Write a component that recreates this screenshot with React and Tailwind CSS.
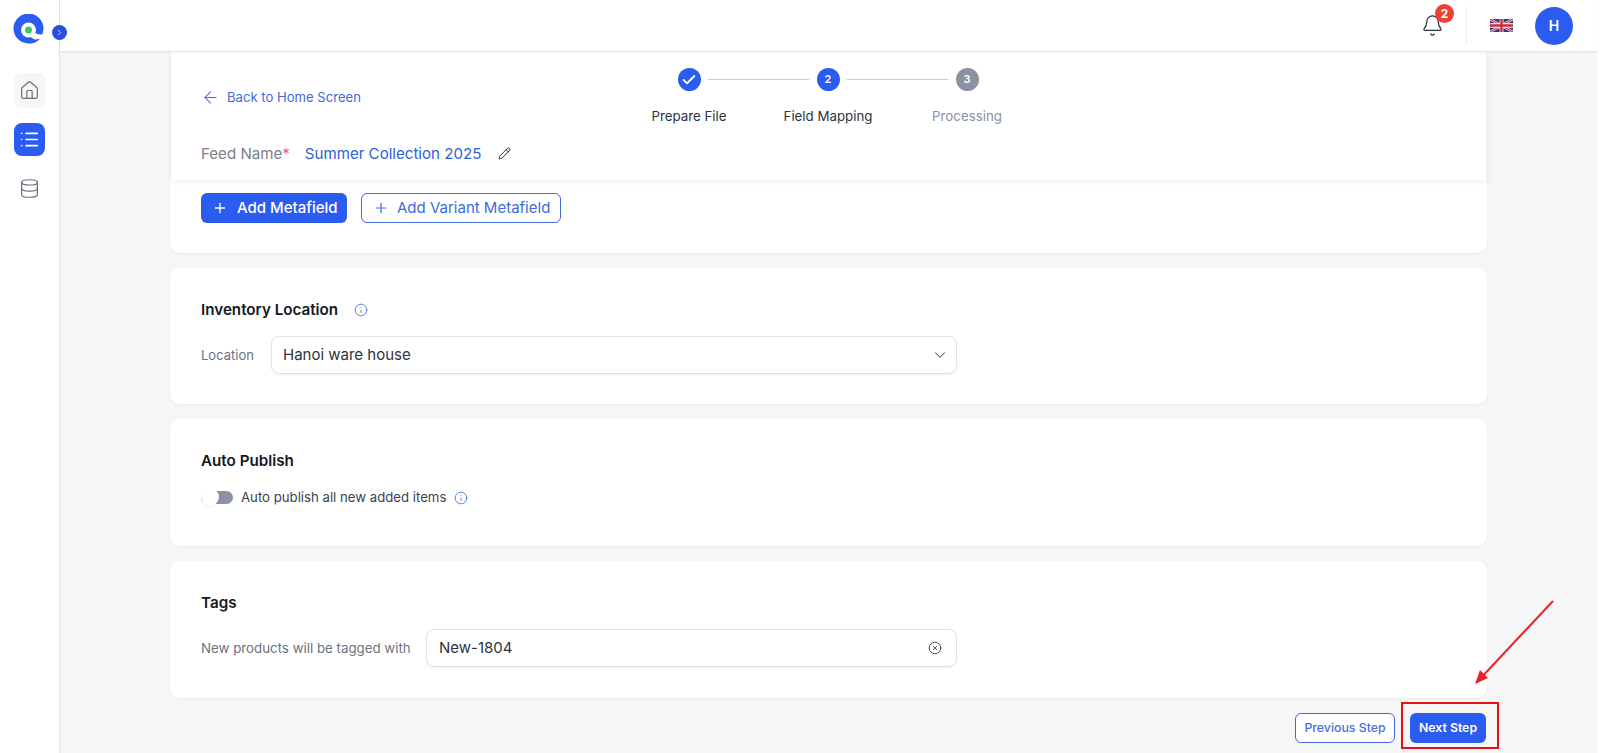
import { ArrowLeft, Bell, Check, ChevronDown, ChevronRight, CircleX, Database, Home, Info, List, Pencil, Plus } from "lucide-react";

const Logo = () => (
    <svg width="32" height="30" viewBox="0 0 32 30">
        <circle cx="15.500" cy="14.500" r="15" fill="#2b5cf0" />
        <path d="M20 18C23 20 27 21 31.500 20V30H27C26 27 25 26.500 24 26C21 25.500 18.500 24 17 22Z" fill="#fff" />
        <path d="M27 24.500C25 27.500 21 29.500 16 29.500C19 28.500 21 27 23 25.500Z" fill="#2b5cf0" />
        <circle cx="15.500" cy="16" r="7.500" fill="#fff" />
        <circle cx="15.500" cy="16" r="3.500" fill="#3ec46d" />
    </svg>
);

const UkFlag = () => (
    <svg width="23" height="13" viewBox="0 0 60 30" preserveAspectRatio="none">
        <rect width="60" height="30" fill="#2b3a7a" />
        <path d="M0 0L60 30M60 0L0 30" stroke="#f4d5da" strokeWidth="6" />
        <path d="M0 0L60 30M60 0L0 30" stroke="#c8283c" strokeWidth="2.500" />
        <path d="M30 0V30M0 15H60" stroke="#fff" strokeWidth="10" />
        <path d="M30 0V30M0 15H60" stroke="#c8283c" strokeWidth="6" />
    </svg>
);

const Sidebar = () => (
    <aside className="relative w-[60px] shrink-0 bg-white border-r border-[#e5e6e8] flex flex-col items-center">
        <div className="mt-[14px] ml-[-2px] h-[30px]">
            <Logo />
        </div>
        <button className="absolute left-[52px] top-[25px] z-20 w-[15px] h-[15px] rounded-full bg-[#2b4fe0] flex items-center justify-center text-white">
            <ChevronRight size={9} strokeWidth={2} />
        </button>
        <div className="mt-[29px] w-[32px] h-[35px] rounded-lg bg-[#f6f6f7] flex items-center justify-center text-[#6b7280]">
            <Home size={21} strokeWidth={1.400} />
        </div>
        <div className="mt-[15px] w-[31px] h-[33px] rounded-lg bg-[#2b5cf0] flex items-center justify-center text-white">
            <List size={21} strokeWidth={1.800} />
        </div>
        <div className="mt-[22px] text-[#6b7280]">
            <Database size={21} strokeWidth={1.400} />
        </div>
    </aside>
);

const Header = () => (
    <header className="h-[52px] shrink-0 bg-white border-b border-[#e3e4e6] shadow-[0_1px_2px_rgba(0,0,0,0.05)] flex items-center justify-end pr-[24px] relative z-10">
        <div className="relative mr-[22px] text-[#2d3340]">
            <Bell size={23} strokeWidth={1.300} />
            <span className="absolute -top-[10px] left-[14px] w-[19px] h-[19px] rounded-full bg-[#ee4035] text-white text-[12px] font-bold flex items-center justify-center">
                2
            </span>
        </div>
        <div className="w-px h-[37px] bg-[#ebecee] mr-[23px]" />
        <UkFlag />
        <div className="ml-[22px] w-[38px] h-[38px] rounded-full bg-[#2b5cf0] text-white font-semibold text-[14px] flex items-center justify-center">
            H
        </div>
    </header>
);

const Stepper = () => (
    <div className="flex flex-col items-center pt-[16px] -ml-[1px]">
        <div className="flex items-center gap-[7.5px]">
            <span className="w-[23px] h-[23px] rounded-full bg-[#2b5cf0] text-white flex items-center justify-center">
                <Check size={16} strokeWidth={2.800} />
            </span>
            <span className="w-[101px] h-px bg-[#c9ccd3]" />
            <span className="w-[23px] h-[23px] rounded-full bg-[#2b5cf0] text-white text-[11px] font-semibold flex items-center justify-center">
                2
            </span>
            <span className="w-[101px] h-px bg-[#c9ccd3]" />
            <span className="w-[23px] h-[23px] rounded-full bg-[#8a92a3] text-white text-[11px] font-semibold flex items-center justify-center">
                3
            </span>
        </div>
        <div className="grid grid-cols-[139px_139px_139px] mt-[15px] text-[13.300px] leading-[20px] text-center">
            <span className="text-[#2d3340]">Prepare File</span>
            <span className="text-[#2d3340]">Field Mapping</span>
            <span className="text-[#8a92a3]">Processing</span>
        </div>
    </div>
);

const TopCard = () => (
    <div className="h-[128px] bg-white border-x border-[#efeff1] shadow-[0_2px_6px_rgba(0,0,0,0.06)] relative z-[5] px-[30px]">
        <div className="grid grid-cols-[1fr_auto_1fr] items-start">
            <a className="flex items-center gap-[7px] text-[#3f6ae0] text-[13.100px] pt-[35px] leading-[20px]">
                <ArrowLeft size={19} strokeWidth={1.300} />
                Back to Home Screen
            </a>
            <Stepper />
            <div />
        </div>
        <div className="flex items-center mt-[17px] text-[15.100px] leading-[22px]">
            <span className="text-[#7a7f88]">Feed Name</span>
            <span className="text-[#f0616d]">*</span>
            <span className="ml-[15px] text-[#2f62d6]">Summer Collection 2025</span>
            <Pencil size={13} strokeWidth={1.700} className="ml-[17px] -mt-[2px] text-[#222]" />
        </div>
    </div>
);

const Card = ({ title, info, height, children }) => (
    <section className={`${height} bg-white rounded-[10px] shadow-[0_1px_3px_rgba(0,0,0,0.05)] pl-[31px] pr-[30px] pt-[31px]`}>
        <div className="flex items-center gap-[16px]">
            <h2 className="text-[15.200px] leading-[22px] font-semibold text-[#14171f]">{title}</h2>
            {info && <Info size={14} strokeWidth={1.400} className="text-[#3f6ae0]" />}
        </div>
        {children}
    </section>
);

const App = () => {
    return (
        <div className="relative flex h-[753px] overflow-hidden bg-white font-['Inter',sans-serif]">
            <Sidebar />
            <main className="flex-1 min-w-0 flex flex-col bg-[#f6f6f7]">
                <Header />
                <div className="w-[1317px] ml-[110px] flex flex-col">
                    <TopCard />

                    <section className="h-[73px] bg-white rounded-b-[10px] shadow-[0_1px_3px_rgba(0,0,0,0.05)] pl-[31px] pr-[30px] pt-[13px] flex items-start gap-[14px] text-[15px] font-medium">
                        <button className="h-[30px] w-[146px] rounded-md bg-[#2b5cf0] text-white flex items-center pl-[11px] gap-[9px]">
                            <Plus size={16} strokeWidth={2} />
                            Add Metafield
                        </button>
                        <button className="h-[30px] w-[200px] rounded-md border border-[#3f6ae0] text-[#3f6ae0] bg-white flex items-center pl-[11px] gap-[8px] font-normal">
                            <Plus size={16} strokeWidth={1.800} />
                            Add Variant Metafield
                        </button>
                    </section>

                    <div className="mt-[15px] flex flex-col gap-[15px]">
                        <Card title="Inventory Location" info height="h-[136px]">
                            <div className="flex items-center mt-[15px]">
                                <span className="w-[70px] text-[13px] leading-[22px] text-[#6b7280]">Location</span>
                                <div className="w-[686px] h-[38px] rounded-lg border border-[#dfe1e5] shadow-[0_1px_2px_rgba(0,0,0,0.05)] bg-white flex items-center justify-between pl-[11px] pr-[7px] text-[15px] text-[#2d3340]">
                                    Hanoi ware house
                                    <ChevronDown size={18} strokeWidth={1.400} className="text-[#4b5563]" />
                                </div>
                            </div>
                        </Card>

                        <Card title="Auto Publish" height="h-[127px]">
                            <div className="flex items-center mt-[16px]">
                                <span className="relative w-[32px] h-[13px] rounded-full bg-[#8a92a3]">
                                    <span className="absolute left-0 top-[-3px] w-[18px] h-[18px] rounded-full bg-white shadow-[0_1px_2px_rgba(0,0,0,0.08)]" />
                                </span>
                                <span className="ml-[8px] text-[13.200px] text-[#3b4150]">Auto publish all new added items</span>
                                <Info size={14} strokeWidth={1.400} className="ml-[8px] text-[#3f6ae0]" />
                            </div>
                        </Card>

                        <Card title="Tags" height="h-[137px]">
                            <div className="flex items-center mt-[15px]">
                                <span className="w-[225px] text-[13.300px] leading-[22px] text-[#6b7280]">New products will be tagged with</span>
                                <div className="w-[531px] h-[38px] rounded-lg border border-[#dfe1e5] shadow-[0_1px_2px_rgba(0,0,0,0.05)] bg-white flex items-center justify-between pl-[12px] pr-[14px] text-[15px] text-[#2d3340]">
                                    New-1804
                                    <CircleX size={14} strokeWidth={1.400} className="text-[#333]" />
                                </div>
                            </div>
                        </Card>
                    </div>

                    <div className="mt-[15px] mr-[1px] flex justify-end gap-[15px] text-[12.300px] font-semibold">
                        <button className="h-[30px] w-[100px] rounded-md border border-[#3f6ae0] text-[#4a6fd8] bg-white font-medium">
                            Previous Step
                        </button>
                        <button className="h-[30px] w-[76px] rounded-md bg-[#2b5cf0] text-white">Next Step</button>
                    </div>
                </div>
            </main>
            <div className="w-[3px] shrink-0 bg-white" />

            {/* red annotation over the page */}
            <div className="absolute left-[1401px] top-[702px] w-[98px] h-[47px] border-[2.500px] border-[#e8111a] z-20" />
            <svg className="absolute left-[1465px] top-[595px] z-20" width="95" height="95" viewBox="0 0 95 95">
                <path d="M88 6L14 85" stroke="#e8222a" strokeWidth="2" fill="none" />
                <path d="M10 89L15 75L23 83Z" fill="#e8222a" />
            </svg>
        </div>
    );
};

export default App;
